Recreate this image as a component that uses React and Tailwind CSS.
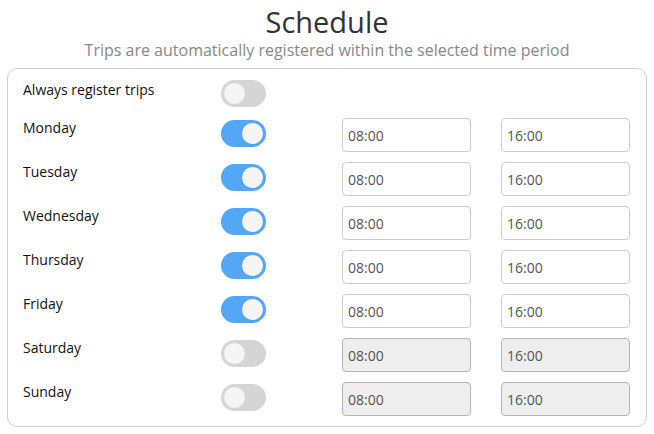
import React, { useState } from 'react';

const DAYS = [
  { name: 'Monday', on: true },
  { name: 'Tuesday', on: true },
  { name: 'Wednesday', on: true },
  { name: 'Thursday', on: true },
  { name: 'Friday', on: true },
  { name: 'Saturday', on: false },
  { name: 'Sunday', on: false },
];

function Toggle({ on, onClick }) {
  return (
    <button
      onClick={onClick}
      className={`w-[45px] h-[27px] rounded-full p-[3px] flex items-center ${on ? 'bg-[#53a7f6] justify-end' : 'bg-[#d5d5d5] justify-start'}`}
    >
      <span className="w-[21px] h-[21px] rounded-full bg-[#f5f5f5] block" />
    </button>
  );
}

function TimeBox({ value, disabled }) {
  return (
    <div
      className={`w-[129px] h-[34px] rounded-[4px] border flex items-center px-[5px] text-[14px] text-[#555] ${disabled ? 'bg-[#eeeeee] border-[#b5b5b5]' : 'bg-white border-[#cccccc]'}`}
    >
      {value}
    </div>
  );
}

export default function App() {
  const [always, setAlways] = useState(false);
  const [days, setDays] = useState(DAYS);

  const flip = (i) => setDays(days.map((d, j) => (j === i ? { ...d, on: !d.on } : d)));

  return (
    <div className="w-[654px] h-[434px] bg-white" style={{ fontFamily: '"Open Sans", sans-serif' }}>
      <div className="text-center pt-[3px]">
        <h1 className="text-[29px] leading-[38px] text-[#333]">Schedule</h1>
        <p className="text-[16px] leading-[20px] text-[#888] mt-[-1px]">
          Trips are automatically registered within the selected time period
        </p>
      </div>
      <div className="mx-[7px] mt-[8px] w-[640px] h-[359px] border border-[#d0d0d0] rounded-[10px] pt-[11px] pl-[15px]">
        <div className="flex h-[40px]">
          <div className="w-[198px] text-[14px] font-medium text-[#111] leading-[18px] pt-[1px]">Always register trips</div>
          <div>
            <Toggle on={always} onClick={() => setAlways(!always)} />
          </div>
        </div>
        {days.map((d, i) => (
          <div key={d.name} className="flex h-[44px]">
            <div className="w-[198px] text-[14px] font-medium text-[#111] leading-[18px] mt-[-1px]">{d.name}</div>
            <div className="w-[121px]">
              <Toggle on={d.on} onClick={() => flip(i)} />
            </div>
            <div className="flex gap-[30px] mt-[-2px]">
              <TimeBox value="08:00" disabled={!d.on} />
              <TimeBox value="16:00" disabled={!d.on} />
            </div>
          </div>
        ))}
      </div>
    </div>
  );
}
